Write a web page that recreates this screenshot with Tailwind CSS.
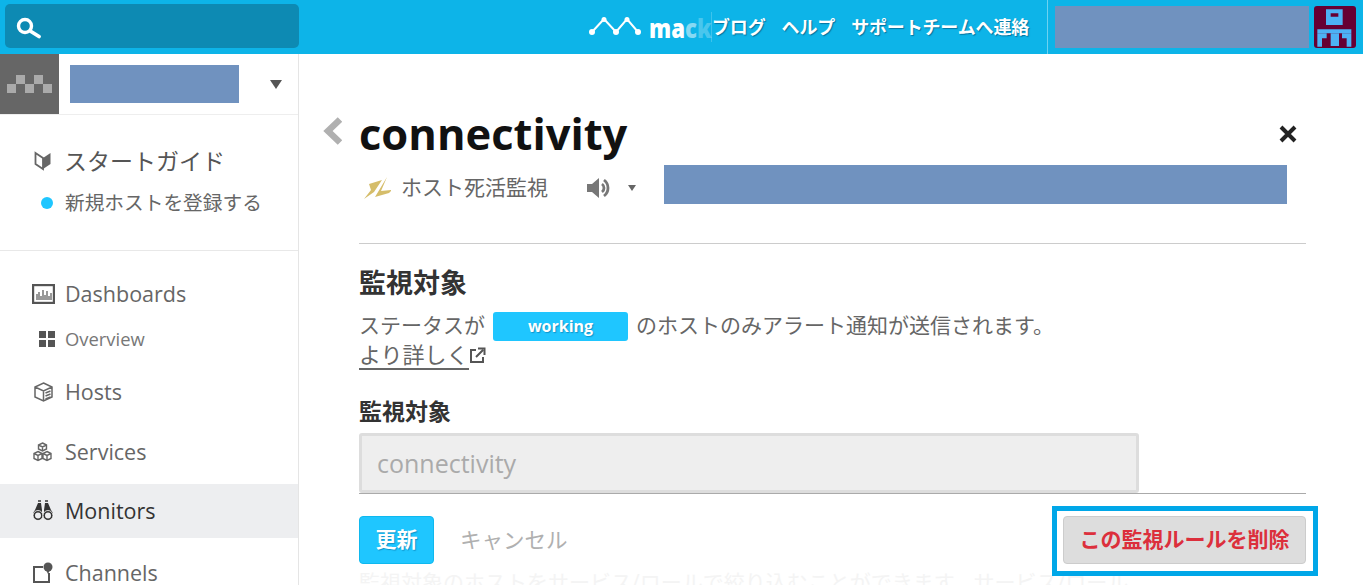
<!DOCTYPE html>
<html lang="ja">
<head>
<meta charset="utf-8">
<script src="https://cdn.jsdelivr.net/npm/@tailwindcss/browser@4"></script>
</head>
<body class="m-0 h-[585px] w-[1363px] overflow-hidden bg-white font-['Open_Sans','Noto_Sans_CJK_JP',sans-serif] text-[#666]">
<header class="flex h-[54px] items-center bg-[#0db4e8]">
  <div class="mb-[2px] ml-[5px] flex h-[44px] w-[294px] items-center rounded-[5px] bg-[#0d8ab3] pl-[11px]">
    <svg width="26" height="26" viewBox="0 0 26 26" fill="none" stroke="#fff" stroke-linecap="round"><circle cx="9" cy="13" r="6.500" stroke-width="3.400"/><path d="M15 18.500l8 5" stroke-width="3.800"/></svg>
  </div>
  <div class="ml-[290px] flex w-[122px] items-center">
    <svg width="54" height="20" viewBox="0 0 54 20" fill="none" stroke="#fff" stroke-width="2"><path d="M3 15L15 2L27 15L38 2L49 15"/><g fill="#fff" stroke="none"><circle cx="3" cy="15" r="3"/><circle cx="15" cy="2.500" r="2.500"/><circle cx="27" cy="15" r="3"/><circle cx="38" cy="2.500" r="2.500"/><circle cx="49" cy="15" r="3"/></g></svg>
    <div class="ml-[6px] w-[62px] shrink-0 whitespace-nowrap"><div class="origin-left scale-x-[0.82] text-[27px] leading-none font-extrabold text-white"><span>ma</span><span class="text-white/50">c</span><span class="text-white/25">k</span></div></div>
  </div>
  <nav class="flex h-[30px] items-center gap-[16px] border-l border-white/20 text-[18px] font-bold tracking-[-0.15px] text-white [text-shadow:1px_1px_1px_rgba(0,90,130,0.7)]">
    <span>ブログ</span><span>ヘルプ</span><span>サポートチームへ連絡</span>
  </nav>
  <div class="ml-[18px] flex h-[54px] items-center border-l border-white/40 pl-[7px]">
    <div class="h-[42px] w-[254px] bg-[#7092bf]"></div>
    <svg class="ml-[5px] rounded-[3px]" width="42" height="42" viewBox="0 0 126 126"><rect width="126" height="126" fill="#660033"/><g fill="#4db2f5"><path d="M36 10h50v47H36z"/><path d="M10 70h102v12H10z"/><path d="M10 82h28v15H24v25H10z"/><path d="M84 82h28v40H98V97H84z"/><path d="M50 82h25v38H50z"/></g><path fill="#660033" d="M50 22h23v10H50z"/></svg>
  </div>
</header>
<div class="flex h-[531px]">
  <aside class="flex w-[299px] shrink-0 flex-col border-r border-[#e5e5e5]">
    <div class="flex h-[61px] shrink-0 items-center border-b border-[#eee]">
      <div class="flex h-[60px] w-[59px] items-center justify-center bg-[#666]">
        <svg width="46" height="20" viewBox="0 0 46 20" fill="#aaa"><rect x="0" y="10" width="9" height="9"/><rect x="9" y="1" width="9" height="9"/><rect x="18" y="10" width="9" height="9"/><rect x="27" y="1" width="9" height="9"/><rect x="36" y="10" width="9" height="9"/></svg>
      </div>
      <div class="ml-[11px] h-[38px] w-[169px] bg-[#7092bf]"></div>
      <div class="ml-[31px] h-0 w-0 border-x-[6px] border-t-[9px] border-x-transparent border-t-[#555]"></div>
    </div>
    <section class="h-[136px] shrink-0 border-b border-[#e8e8e8] pt-[29px]">
      <div class="flex h-[34px] items-center pl-[34px] text-[23px] text-[#555]">
        <svg width="18" height="22" viewBox="0 0 18 22" class="mr-[12px]"><path fill="none" stroke="#666" stroke-width="1.800" d="M1.500 3l7.500 5v11l-7.500-5z"/><path fill="#666" d="M9 8l7.500-5v11L9 19z"/></svg>
        <span>スタートガイド</span>
      </div>
      <div class="mt-[8px] flex h-[34px] items-center pl-[41px] text-[19.700px] text-[#666]">
        <span class="mr-[12px] h-[12px] w-[12px] rounded-full bg-[#1fc6ff]"></span>
        <span>新規ホストを登録する</span>
      </div>
    </section>
    <a class="mt-[23px] flex h-[40px] shrink-0 items-center pl-[32px] text-[21.500px]">
      <svg class="mr-[10px]" width="23" height="20" viewBox="0 0 23 20"><rect x="1" y="1" width="21" height="18" fill="none" stroke="#555" stroke-width="2.400"/><path stroke="#555" stroke-width="1.200" d="M5 16V10M7 16V8M9 16V12M11 16V6M13 16V11M15 16V7M17 16V12M19 16V9"/></svg>
      <span>Dashboards</span>
    </a>
    <a class="mt-[7px] flex h-[36px] shrink-0 items-center pl-[39px] text-[18.400px] text-[#777]">
      <svg class="mr-[10px]" width="16" height="16" viewBox="0 0 16 16" fill="#555"><rect width="7" height="7"/><rect x="9" width="7" height="7"/><rect y="9" width="7" height="7"/><rect x="9" y="9" width="7" height="7"/></svg>
      <span>Overview</span>
    </a>
    <a class="mt-[10px] flex h-[50px] shrink-0 items-center pl-[34px] text-[21.500px]">
      <svg class="mr-[12px]" width="19" height="20" viewBox="0 0 19 20" fill="none" stroke="#666" stroke-width="1.500"><path d="M9.500 1L18 5v10l-8.500 4L1 15V5zM1 5l8.500 4L18 5M9.500 9v10M11.500 11l5-2M11.500 14l5-2M11.500 17l5-2"/></svg>
      <span>Hosts</span>
    </a>
    <a class="mt-[10px] flex h-[50px] shrink-0 items-center pl-[32px] text-[21.500px]">
      <svg class="mr-[12px]" width="21" height="20" viewBox="0 0 21 20" fill="none" stroke="#666" stroke-width="1.400"><path d="M10.500 1l4 2v4l-4 2-4-2V3zM6 9.500l4 2v5l-4 2-4-2v-5zM15 9.500l4 2v5l-4 2-4-2v-5zM2 11.500l4 2 4-2M11 11.500l4 2 4-2M6 13.500v5M15 13.500v5M6.500 3l4 2 4-2M10.500 5v4"/></svg>
      <span>Services</span>
    </a>
    <a class="mt-[7px] flex h-[54px] shrink-0 items-center bg-[#edeef0] pl-[32px] text-[21.500px] text-[#333]">
      <svg class="mr-[11px]" width="22" height="22" viewBox="0 0 22 22" fill="#333"><path d="M3 10L6 3h3l1 7v3H1zM19 10L16 3h-3l-1 7v3h9z"/><path d="M6 0h3v2H6zM13 0h3v2h-3z" fill="#666"/><circle cx="6" cy="15.500" r="5" fill="#333" stroke="#fff" stroke-width="0.800"/><circle cx="16" cy="15.500" r="5" fill="#333" stroke="#fff" stroke-width="0.800"/><circle cx="6" cy="15.500" r="3" fill="#edeef0"/><circle cx="16" cy="15.500" r="3" fill="#edeef0"/></svg>
      <span>Monitors</span>
    </a>
    <a class="mt-[10px] flex h-[50px] shrink-0 items-center pl-[33px] text-[21.500px]">
      <svg class="mr-[12px]" width="20" height="22" viewBox="0 0 20 22"><path fill="none" stroke="#555" stroke-width="2" d="M10 5H1v15h15v-9"/><circle cx="15" cy="5" r="4.500" fill="#555"/><path d="M13 8h4l-2 4z" fill="#555"/></svg>
      <span>Channels</span>
    </a>
  </aside>
  <main class="relative flex-1 overflow-hidden pl-[60px]">
    <div class="absolute left-[23px] top-[63px]">
      <svg width="20" height="28" viewBox="0 0 20 28"><path d="M18 2.500L6 14l12 11.500" fill="none" stroke="#b0b0b0" stroke-width="6.500"/></svg>
    </div>
    <div class="w-[947px]">
      <div class="flex items-start justify-between pr-[8px] pt-[50px]">
        <h1 class="text-[43.500px] leading-[60px] font-bold text-[#111]">connectivity</h1>
        <svg class="mt-[20px]" width="20" height="20" viewBox="0 0 20 20"><path d="M3 3l14 14M17 3L3 17" stroke="#222" stroke-width="4"/></svg>
      </div>
      <div class="flex h-[40px] items-start">
        <div class="flex h-[47px] items-center pl-[5px] text-[21px] text-[#666]">
          <svg width="27" height="22" viewBox="7 7 27 22" fill="#d5bd6a"><path d="M12 14L25 10 17 22 7 29 14 20z"/><path d="M30 7L24 21 35 20 32 23 18 27z"/></svg>
          <span class="ml-[10px]">ホスト死活監視</span>
          <svg class="ml-[38px]" width="26" height="26" viewBox="0 0 26 24" fill="#777"><path d="M1 8h5l7-6v20l-7-6H1z"/><path d="M16 8a5 5 0 010 8M18 4a10 10 0 010 16" fill="none" stroke="#777" stroke-width="2.800"/></svg>
          <div class="ml-[16px] h-0 w-0 border-x-[4px] border-t-[6px] border-x-transparent border-t-[#666]"></div>
        </div>
        <div class="ml-[28px] mt-[1px] h-[39px] w-[623px] bg-[#7092bf]"></div>
      </div>
      <hr class="mt-[39px] border-0 border-t border-[#ccc]">
      <h2 class="mt-[20px] text-[27px] leading-[38px] font-bold text-[#333]">監視対象</h2>
      <p class="mt-[9px] flex h-[30px] items-center text-[21px] text-[#666]">
        ステータスが
        <span class="mx-[8px] flex h-[29px] w-[135px] items-center justify-center rounded-[3px] bg-[#1fc6ff] text-[16px] font-bold text-white [text-shadow:1px_1px_1px_rgba(0,100,150,0.5)]">working</span>
        のホストのみアラート通知が送信されます。
      </p>
      <p class="flex h-[28px] items-center text-[22px] text-[#666]">
        <a class="border-b-2 border-[#666] leading-[28px]">より詳しく</a>
        <svg class="ml-[0px]" width="17" height="17" viewBox="0 0 17 17" fill="none" stroke="#555" stroke-width="2"><path d="M7 3H2v12h12v-5"/><path d="M7 10l7-7M9 1.500h6.500V8" /></svg>
      </p>
      <label class="mt-[27px] block text-[23px] leading-[30px] font-bold text-[#333]">監視対象</label>
      <div class="mt-[7px] h-[61px] border-b border-[#aaa]">
        <div class="flex h-[60px] w-[780px] items-center rounded-[3px] border-[3px] border-[#ddd] bg-[#eee] pl-[15px] pt-[2px] text-[25px] text-[#aaa]">connectivity</div>
      </div>
      <div class="relative mt-[22px] flex h-[48px] items-center">
        <button class="h-[48px] w-[75px] rounded-[4px] border border-[#0fb8ee] bg-[#1fc6ff] text-[21px] font-bold text-white [text-shadow:1px_1px_1px_rgba(0,100,150,0.5)]">更新</button>
        <span class="ml-[26px] text-[21.500px] text-[#b0b0b0]">キャンセル</span>
        <button class="ml-auto h-[48px] w-[243px] rounded-[4px] border border-[#ccc] bg-[#ddd] text-[21px] font-bold text-[#dc2f3c]">この監視ルールを削除</button>
        <div class="absolute right-[-12px] top-[-10px] h-[70px] w-[266px] border-[5px] border-[#00a7e8]"></div>
      </div>
      <p class="mt-[4px] whitespace-nowrap text-[21px] leading-[28px] text-[#f4f4f4]">監視対象のホストをサービス/ロールで絞り込むことができます。サービス/ロール</p>
    </div>
  </main>
</div>
</body>
</html>
